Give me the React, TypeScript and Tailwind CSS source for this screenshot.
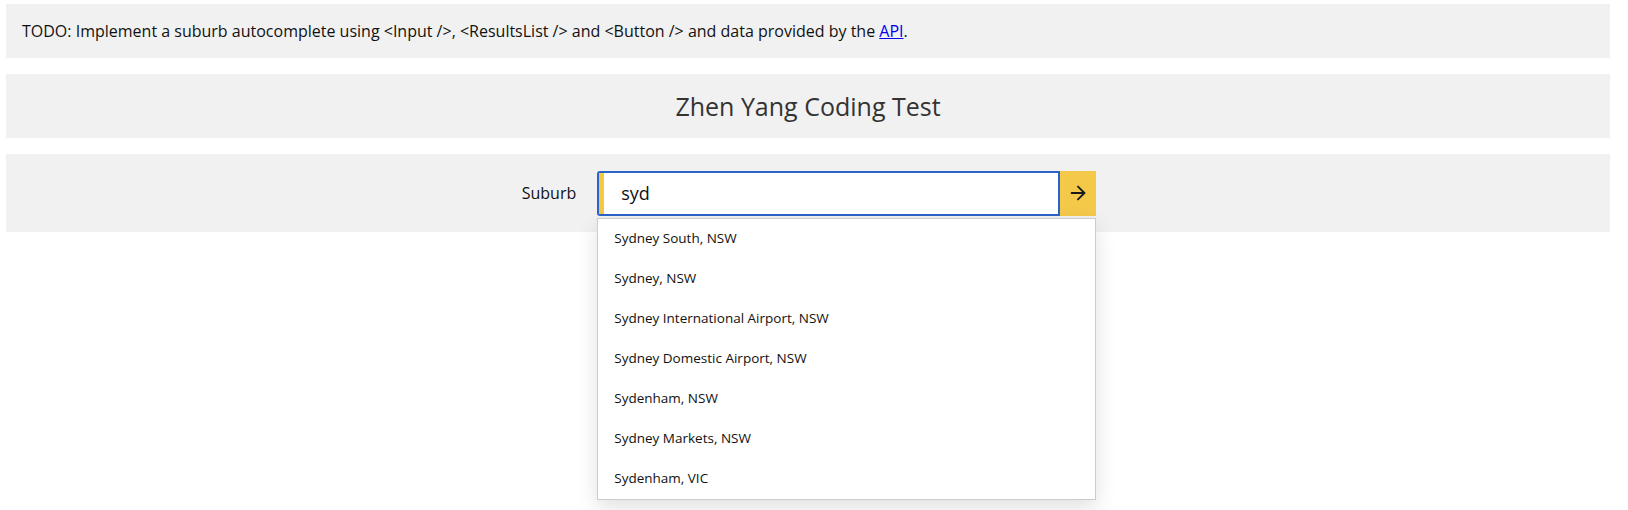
import { ArrowRight } from 'lucide-react';

const results = [
  'Sydney South, NSW',
  'Sydney, NSW',
  'Sydney International Airport, NSW',
  'Sydney Domestic Airport, NSW',
  'Sydenham, NSW',
  'Sydney Markets, NSW',
  'Sydenham, VIC',
];

export default function App() {
  return (
    <div className="min-h-[510px] bg-white">
      <div className="ml-[6px] w-[1604px] pt-[4px] font-['Open_Sans',sans-serif] text-[#111]">
        <section className="bg-[#f1f1f1] px-4 py-4 text-[16px] leading-[22px]">
          TODO: Implement a suburb autocomplete using &lt;Input /&gt;, &lt;ResultsList /&gt; and &lt;Button /&gt; and
          data provided by the{' '}
          <a href="#" className="text-[#0000ee] underline">
            API
          </a>
          .
        </section>

        <header className="mt-4 bg-[#f1f1f1] py-4 text-center text-[25px] leading-[32px] text-[#333]">
          Zhen Yang Coding Test
        </header>

        <section className="relative mt-4 flex h-[78px] items-center justify-center bg-[#f1f1f1]">
          <div className="flex items-center gap-[21px] pl-[2px]">
            <label className="text-[16px]">Suburb</label>
            <div className="relative z-10 flex h-[45px] w-[499px]">
              <div className="flex flex-1 overflow-hidden rounded-l-[3px] border-2 border-[#2b63c8] bg-white">
                <span className="w-[5px] bg-[#f4c843]" />
                <input
                  readOnly
                  value="syd"
                  className="min-w-0 flex-1 bg-transparent pl-[17px] text-[18px] outline-none"
                />
              </div>
              <button className="flex w-[36px] items-center justify-center bg-[#f4c94a]">
                <ArrowRight size={22} strokeWidth={2} className="text-[#1a1a1a]" />
              </button>

              {/* Results list */}
              <ul className="absolute left-0 top-[47px] z-20 w-[499px] border border-[#cccccc] bg-white shadow-[0_8px_20px_rgba(0,0,0,0.12)]">
                {results.map((r) => (
                  <li key={r} className="flex h-[40px] items-center pl-[16px] text-[13.5px]">
                    {r}
                  </li>
                ))}
              </ul>
            </div>
          </div>
        </section>
      </div>
    </div>
  );
}
